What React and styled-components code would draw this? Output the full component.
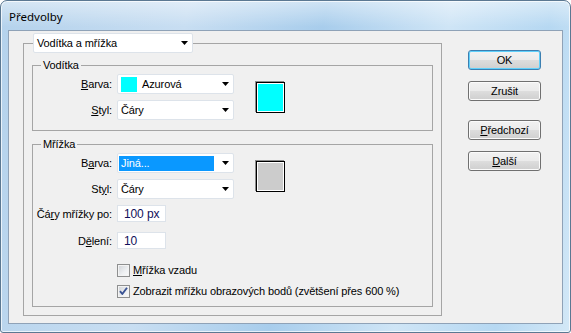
import React from 'react';
import styled, { createGlobalStyle } from 'styled-components';

const GlobalStyle = createGlobalStyle`
  html, body {
    margin: 0;
    padding: 0;
    background: #fff;
  }
  body {
    width: 571px;
    height: 333px;
    overflow: hidden;
    font-family: "Liberation Sans", Arial, sans-serif;
    font-size: 11px;
    letter-spacing: -0.12px;
    color: #000;
  }
`;

const Arrow = () => (
    <svg width="7" height="4" viewBox="0 0 7 4">
        <polygon points="0,0 7,0 3.5,4" fill="#000" />
    </svg>
);

const Check = () => (
    <svg width="11" height="11" viewBox="0 0 11 11">
        <path d="M2 5.2 L4.3 8 L9 1.8" fill="none" stroke="#3a5394" strokeWidth="1.9" strokeLinejoin="round" />
    </svg>
);

const Combo = ({ width, swatch, selected, children }) => (
    <ComboBox $width={width}>
        <ComboValue $selected={selected}>
            {swatch && <ComboSwatch $color={swatch} />}
            {children}
        </ComboValue>
        <ArrowBox><Arrow /></ArrowBox>
    </ComboBox>
);

const Field = ({ label, gap, children }) => (
    <FieldRow $gap={gap}>
        <Label>{label}</Label>
        {children}
    </FieldRow>
);

const Option = ({ checked, children }) => (
    <OptionRow>
        <CheckBox>{checked && <Check />}</CheckBox>
        <span>{children}</span>
    </OptionRow>
);

const App = () => (
    <>
        <GlobalStyle />
        <Window>
            <TitleBar>Předvolby</TitleBar>
            <Client>
                <OuterGroup>
                    <OuterLegend>
                        <Combo width={160}>Vodítka a mřížka</Combo>
                    </OuterLegend>
                    <OuterBody>
                        <Group>
                            <Legend>Vodítka</Legend>
                            <GroupBody $bottom={10}>
                                <TopBlock>
                                    <Fields>
                                        <Field label={<><u>B</u>arva:</>}>
                                            <Combo width={117} swatch="#00ffff">Azurová</Combo>
                                        </Field>
                                        <Field label={<><u>S</u>tyl:</>} gap={6}>
                                            <Combo width={117}>Čáry</Combo>
                                        </Field>
                                    </Fields>
                                    <Swatch $color="#00ffff" />
                                </TopBlock>
                            </GroupBody>
                        </Group>
                        <Group $top={7}>
                            <Legend>Mřížka</Legend>
                            <GroupBody $bottom={8}>
                                <TopBlock>
                                    <Fields>
                                        <Field label={<>B<u>a</u>rva:</>}>
                                            <Combo width={117} selected>Jiná...</Combo>
                                        </Field>
                                        <Field label={<>St<u>y</u>l:</>} gap={6}>
                                            <Combo width={117}>Čáry</Combo>
                                        </Field>
                                    </Fields>
                                    <Swatch $color="#cccccc" />
                                </TopBlock>
                                <Field label={<>Čá<u>r</u>y mřížky po:</>} gap={6}>
                                    <TextInput>100 px</TextInput>
                                </Field>
                                <Field label={<>D<u>ě</u>lení:</>} gap={10}>
                                    <TextInput>10</TextInput>
                                </Field>
                                <Options>
                                    <Option><u>M</u>řížka vzadu</Option>
                                    <Option checked>Zobrazit mřížku obrazových bodů (zvětšení přes 600 %)</Option>
                                </Options>
                            </GroupBody>
                        </Group>
                    </OuterBody>
                </OuterGroup>
                <Buttons>
                    <Button $default>OK</Button>
                    <Button $gap={11}>Zrušit</Button>
                    <Button $gap={19}><u>P</u>ředchozí</Button>
                    <Button $gap={11}><u>D</u>alší</Button>
                </Buttons>
            </Client>
        </Window>
    </>
);

export default App;

const Window = styled.div`
    box-sizing: border-box;
    width: 571px;
    height: 333px;
    display: flex;
    flex-direction: column;
    padding: 0 7px 8px;
    border: 1px solid #5b7892;
    border-radius: 7px 7px 3px 3px;
    background:
        linear-gradient(180deg, rgba(255, 255, 255, 0.45) 0px, rgba(255, 255, 255, 0) 26px),
        linear-gradient(100deg, #b4d2ec 0%, #c8def2 30%, #a8cdec 52%, #cfe5f6 72%, #b6d8f2 88%, #d3e8f7 100%);
    box-shadow: inset 0 0 0 1px rgba(255, 255, 255, 0.7);
`;

const TitleBar = styled.div`
    height: 29px;
    display: flex;
    align-items: center;
    padding: 1px 0 0 1px;
    box-sizing: border-box;
    font-family: "Noto Sans", "Open Sans", sans-serif;
    font-size: 11.5px;
    letter-spacing: 0;
    color: #000;
`;

const Client = styled.div`
    flex: 1;
    display: flex;
    align-items: flex-start;
    padding: 2px 0 0 14px;
    background: #f0f0f0;
    border: 1px solid #8fa2b7;
`;

const OuterGroup = styled.fieldset`
    box-sizing: border-box;
    width: 419px;
    min-width: 0;
    margin: 0;
    padding: 0;
    border: 1px solid #a5a5a5;
`;

const OuterLegend = styled.legend`
    margin-left: 9px;
    padding: 0;
    height: 20px;
`;

const OuterBody = styled.div`
    padding: 6px 8px 8px;
`;

const Group = styled.fieldset`
    box-sizing: border-box;
    min-width: 0;
    margin: ${p => p.$top || 0}px 0 0;
    padding: 0;
    border: 1px solid #a5a5a5;
`;

const Legend = styled.legend`
    margin-left: 8px;
    padding: 0 2px;
    line-height: 13px;
`;

const GroupBody = styled.div`
    display: flex;
    flex-direction: column;
    padding: 2px 0 ${p => p.$bottom}px;
`;

const TopBlock = styled.div`
    display: flex;
    align-items: center;
`;

const Fields = styled.div`
    display: flex;
    flex-direction: column;
`;

const FieldRow = styled.div`
    display: grid;
    grid-template-columns: 79px auto;
    column-gap: 5px;
    align-items: center;
    justify-content: start;
    margin-top: ${p => p.$gap || 0}px;
`;

const Label = styled.span`
    text-align: right;
    white-space: nowrap;
`;

const ComboBox = styled.div`
    box-sizing: border-box;
    width: ${p => p.$width}px;
    height: 20px;
    display: flex;
    align-items: center;
    padding-left: 1px;
    background: #fff;
    border: 1px solid #dde3ea;
    border-radius: 2px;
`;

const ComboValue = styled.span`
    flex: 1;
    height: 15px;
    display: flex;
    align-items: center;
    gap: 5px;
    padding-left: 2px;
    white-space: nowrap;
    background: ${p => (p.$selected ? '#0a98ff' : 'transparent')};
    color: ${p => (p.$selected ? '#fff' : '#000')};
`;

const ComboSwatch = styled.span`
    width: 16px;
    height: 15px;
    background: ${p => p.$color};
`;

const ArrowBox = styled.span`
    width: 19px;
    display: flex;
    justify-content: flex-end;
    padding-right: 4px;
    box-sizing: border-box;
`;

const Swatch = styled.div`
    box-sizing: border-box;
    width: 29px;
    height: 31px;
    margin: 0 0 0 22px;
    border: 1px solid #000;
    background: ${p => p.$color};
    box-shadow: -1px -1px 0 #8c8c8c, inset 0 0 0 1px #fff;
`;

const TextInput = styled.div`
    box-sizing: border-box;
    width: 49px;
    height: 17px;
    display: flex;
    align-items: center;
    padding-left: 6px;
    background: #fff;
    border: 1px solid #dde3ea;
    color: #10105a;
    font-size: 12px;
`;

const Options = styled.div`
    display: flex;
    flex-direction: column;
    gap: 7px;
    margin: 14px 0 0 84px;
`;

const OptionRow = styled.label`
    display: flex;
    align-items: center;
    gap: 3px;
    height: 14px;
    white-space: nowrap;
`;

const CheckBox = styled.span`
    box-sizing: border-box;
    width: 13px;
    height: 13px;
    display: flex;
    align-items: center;
    justify-content: center;
    border: 1px solid #8e8f8f;
    background: linear-gradient(135deg, #cfd2d6 0%, #eef0f2 60%, #fafafa 100%);
    box-shadow: inset 0 0 0 1px #f3f3f3;
`;

const Buttons = styled.div`
    display: flex;
    flex-direction: column;
    margin: 17px 0 0 26px;
`;

const Button = styled.div`
    box-sizing: border-box;
    width: 73px;
    height: 20px;
    margin-top: ${p => p.$gap || 0}px;
    display: flex;
    align-items: center;
    justify-content: center;
    border: 1px solid ${p => (p.$default ? '#3c7fb1' : '#707070')};
    border-radius: 3px;
    background: linear-gradient(180deg, #f2f2f2 0%, #ebebeb 48%, #dddddd 52%, #cfcfcf 100%);
    box-shadow: inset 0 0 0 1px ${p => (p.$default ? '#5fd0fb' : '#fbfbfb')};
`;
